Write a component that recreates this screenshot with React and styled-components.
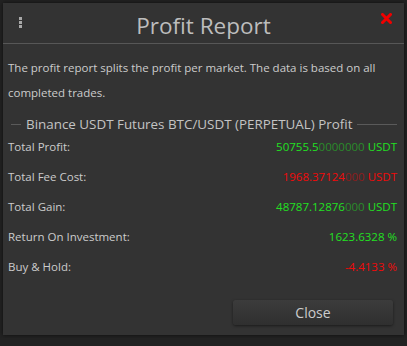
import styled, { createGlobalStyle } from "styled-components";

const GlobalStyle = createGlobalStyle`
    body {
        margin: 0;
        background: #222222;
        font-family: 'Open Sans', 'Noto Sans', sans-serif;
    }
`;

const rows = [
    { label: "Total Profit:", value: "50755.5", dim: "0000000", unit: "USDT", tone: "green" },
    { label: "Total Fee Cost:", value: "1968.37124", dim: "000", unit: "USDT", tone: "red" },
    { label: "Total Gain:", value: "48787.12876", dim: "000", unit: "USDT", tone: "green" },
    { label: "Return On Investment:", value: "1623.6328", dim: "", unit: "%", tone: "green" },
    { label: "Buy & Hold:", value: "-4.4133", dim: "", unit: "%", tone: "red" },
];

function App() {
    return (
        <>
            <GlobalStyle />
            <Dialog>
                <Header>
                    <Kebab>
                        <span />
                        <span />
                        <span />
                    </Kebab>
                    <Title>Profit Report</Title>
                    <CloseIcon>
                        <svg width="11" height="11" viewBox="0 0 11 11">
                            <path d="M1.5 1.5 L9.5 9.5 M9.5 1.5 L1.5 9.5" stroke="#f00000" strokeWidth="3" strokeLinecap="square" />
                        </svg>
                    </CloseIcon>
                </Header>
                <Body>
                    <Intro>
                        The profit report splits the profit per market. The data is based on all completed trades.
                    </Intro>
                    <Market>
                        <Legend>Binance USDT Futures BTC/USDT (PERPETUAL) Profit</Legend>
                        {rows.map((row) => (
                            <Row key={row.label}>
                                <Label>{row.label}</Label>
                                <Value $tone={row.tone}>
                                    {row.value}
                                    {row.dim && <Dim $tone={row.tone}>{row.dim}</Dim>} {row.unit}
                                </Value>
                            </Row>
                        ))}
                    </Market>
                </Body>
                <Footer>
                    <CloseButton>Close</CloseButton>
                </Footer>
            </Dialog>
        </>
    );
}

export default App;

const Dialog = styled.div`
    margin: 3px;
    width: 401px;
    height: 332px;
    background: #333333;
    box-shadow: 0 0 4px rgba(0, 0, 0, 0.6);
    display: flex;
    flex-direction: column;
`;

const Header = styled.div`
    height: 40px;
    border-bottom: 1px solid #575757;
    display: flex;
    align-items: center;
    position: relative;
`;

const Kebab = styled.div`
    position: absolute;
    left: 16px;
    top: 14px;
    display: flex;
    flex-direction: column;
    gap: 1px;
    span {
        width: 3px;
        height: 3px;
        background: #a8a8a8;
    }
`;

const Title = styled.div`
    flex: 1;
    text-align: center;
    font-size: 22.5px;
    color: #bdbdbd;
    padding-top: 5px;
`;

const CloseIcon = styled.div`
    position: absolute;
    right: 12px;
    top: 10px;
    display: flex;
`;

const Body = styled.div`
    padding: 0 7px 0 5px;
    flex: 1;
`;

const Intro = styled.p`
    margin: 11px 0 0;
    font-size: 11.5px;
    line-height: 25px;
    color: #cccccc;
`;

const Market = styled.div`
    margin-top: 10px;
`;

const Legend = styled.div`
    display: flex;
    align-items: center;
    gap: 5px;
    margin-bottom: -2px;
    font-size: 13.4px;
    color: #c4c4c4;
    padding-left: 3px;
    &::before, &::after {
        content: "";
        height: 1px;
        background: #5a5a5a;
    }
    &::before {
        width: 10px;
    }
    &::after {
        flex: 1;
    }
`;

const Row = styled.div`
    height: 30px;
    display: flex;
    align-items: center;
    justify-content: space-between;
    font-size: 11.5px;
`;

const Label = styled.span`
    color: #cccccc;
`;

const Value = styled.span`
    color: ${(p) => (p.$tone === "green" ? "#22e022" : "#f00a0a")};
`;

const Dim = styled.span`
    color: ${(p) => (p.$tone === "green" ? "#2a8c2a" : "#8e1c1c")};
`;

const Footer = styled.div`
    display: flex;
    justify-content: flex-end;
    padding: 0 11px 10px 0;
`;

const CloseButton = styled.button`
    width: 160px;
    height: 25px;
    border: none;
    border-radius: 3px;
    background: linear-gradient(#3c3c3c, #2f2f2f);
    box-shadow: 0 1px 3px rgba(0, 0, 0, 0.5);
    color: #cccccc;
    font-family: 'Open Sans', 'Noto Sans', sans-serif;
    font-size: 14px;
`;
